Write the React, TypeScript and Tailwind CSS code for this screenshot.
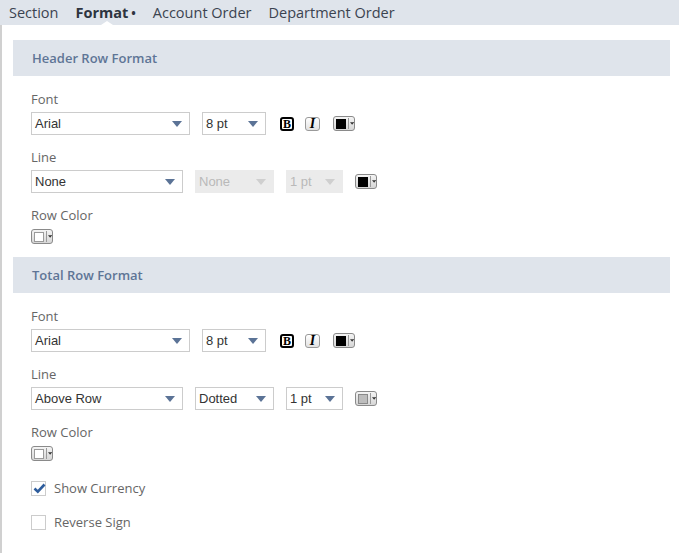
import React from "react";

type SelectProps = {
  value: string;
  width: string;
  disabled?: boolean;
};

function Select({ value, width, disabled }: SelectProps) {
  return (
    <div
      className={`${width} h-[23px] flex items-center justify-between pl-[3px] pr-[7px] ${
        disabled
          ? "bg-[#ebebeb] border border-[#ebebeb] text-[#b9b9b9]"
          : "bg-white border border-[#cccccc] text-[#333333]"
      }`}
      style={{ fontFamily: '"Liberation Sans", Arial, sans-serif' }}
    >
      <span className="text-[13px] leading-none">{value}</span>
      <svg width="10" height="6" viewBox="0 0 10 6">
        <path d="M0 0 L10 0 L5 6 Z" fill={disabled ? "#cfcfcf" : "#5b7396"} />
      </svg>
    </div>
  );
}

function ColorPicker({ swatch }: { swatch: string }) {
  return (
    <div className="w-[22px] h-[15px] rounded-[3px] border border-[#8a8a8a] bg-gradient-to-b from-[#f4f4f4] to-[#d6d6d6] flex items-center pl-[2px]">
      <div
        className={`w-[11px] h-[10px] border ${
          swatch === "white"
            ? "bg-white border-[#9a9a9a]"
            : swatch === "gray"
            ? "bg-[#bdbdbd] border-[#8a8a8a]"
            : "bg-black border-black"
        }`}
      />
      <div className="w-px h-[11px] bg-[#9a9a9a] ml-[2px]" />
      <svg width="5" height="3" viewBox="0 0 5 3" className="ml-[1px]">
        <path d="M0 0 L5 0 L2.5 3 Z" fill="#333" />
      </svg>
    </div>
  );
}

function StyleButtons() {
  return (
    <div className="flex items-center">
      <div
        className="ml-[2px] w-[14px] h-[14px] rounded-[3px] border-2 border-black bg-white flex items-center justify-center text-[12px] font-bold leading-none text-black"
        style={{ fontFamily: '"Liberation Serif", serif' }}
      >
        B
      </div>
      <div
        className="ml-[11px] w-[15px] h-[14px] rounded-[3px] border border-[#9a9a9a] bg-gradient-to-b from-white to-[#e2e2e2] flex items-center justify-center text-[14px] font-bold italic leading-none text-black"
        style={{ fontFamily: '"Liberation Serif", serif' }}
      >
        I
      </div>
      <div className="ml-[13px]">
        <ColorPicker swatch="black" />
      </div>
    </div>
  );
}

function Label({ children, top }: { children: React.ReactNode; top: string }) {
  return (
    <div className={`${top} h-[18px] leading-[18px] text-[13px] text-[#666666]`}>
      {children}
    </div>
  );
}

function SectionBar({ title, top }: { title: string; top: string }) {
  return (
    <div
      className={`${top} h-[36px] bg-[#dfe4eb] flex items-center pl-[19px] pt-[1px] text-[13px] font-semibold text-[#5e7596]`}
    >
      {title}
    </div>
  );
}

function Checkbox({ checked, label, top }: { checked: boolean; label: string; top: string }) {
  return (
    <div className={`${top} flex items-center`}>
      <div className="w-[15px] h-[15px] border border-[#cccccc] bg-white relative">
        {checked && (
          <svg
            width="13"
            height="11"
            viewBox="0 0 13 11"
            className="absolute left-[1px] top-[1px]"
          >
            <path d="M1.5 5.5 L4.8 8.6 L11.5 1.5" stroke="#2d5c9c" strokeWidth="2.6" fill="none" />
          </svg>
        )}
      </div>
      <span className="ml-[8px] text-[13px] text-[#666666]">{label}</span>
    </div>
  );
}

export default function App() {
  const tabs = ["Section", "Format", "Account Order", "Department Order"];

  return (
    <div
      className="w-[679px] h-[553px] bg-white overflow-hidden flex flex-col"
      style={{ fontFamily: '"Open Sans", "Noto Sans", sans-serif' }}
    >
      <div className="h-[25px] bg-[#dfe4eb] flex items-center pl-[9px] gap-[17px] relative shrink-0">
        {tabs.map((t) =>
          t === "Format" ? (
            <span key={t} className="text-[14.5px] font-bold text-[#2e3440] relative">
              Format<span className="ml-[3px] text-[12px]">•</span>
            </span>
          ) : (
            <span key={t} className="text-[14.5px] text-[#3b4350]">
              {t}
            </span>
          )
        )}
        <div className="absolute left-[101px] bottom-0 w-0 h-0 border-l-[6px] border-r-[6px] border-b-[4px] border-l-transparent border-r-transparent border-b-white" />
      </div>

      <div className="flex-1 border-l-2 border-[#d0d0d0] pl-[11px] pr-[9px] pt-[15px]">
        <SectionBar title="Header Row Format" top="" />
        <div className="pl-[18px]">
          <Label top="mt-[14px]">Font</Label>
          <div className="mt-[4px] flex items-center gap-[12px]">
            <Select value="Arial" width="w-[159px]" />
            <Select value="8 pt" width="w-[64px]" />
            <StyleButtons />
          </div>

          <Label top="mt-[13px]">Line</Label>
          <div className="mt-[4px] flex items-center gap-[12px]">
            <Select value="None" width="w-[152px]" />
            <Select value="None" width="w-[79px]" disabled />
            <Select value="1 pt" width="w-[57px]" disabled />
            <ColorPicker swatch="black" />
          </div>

          <Label top="mt-[13px]">Row Color</Label>
          <div className="mt-[5px]">
            <ColorPicker swatch="white" />
          </div>
        </div>

        <SectionBar title="Total Row Format" top="mt-[13px]" />
        <div className="pl-[18px]">
          <Label top="mt-[14px]">Font</Label>
          <div className="mt-[4px] flex items-center gap-[12px]">
            <Select value="Arial" width="w-[159px]" />
            <Select value="8 pt" width="w-[64px]" />
            <StyleButtons />
          </div>

          <Label top="mt-[13px]">Line</Label>
          <div className="mt-[4px] flex items-center gap-[12px]">
            <Select value="Above Row" width="w-[152px]" />
            <Select value="Dotted" width="w-[79px]" />
            <Select value="1 pt" width="w-[57px]" />
            <ColorPicker swatch="gray" />
          </div>

          <Label top="mt-[13px]">Row Color</Label>
          <div className="mt-[5px]">
            <ColorPicker swatch="white" />
          </div>

          <Checkbox checked label="Show Currency" top="mt-[18px]" />
          <Checkbox checked={false} label="Reverse Sign" top="mt-[14px]" />
        </div>
      </div>
    </div>
  );
}
